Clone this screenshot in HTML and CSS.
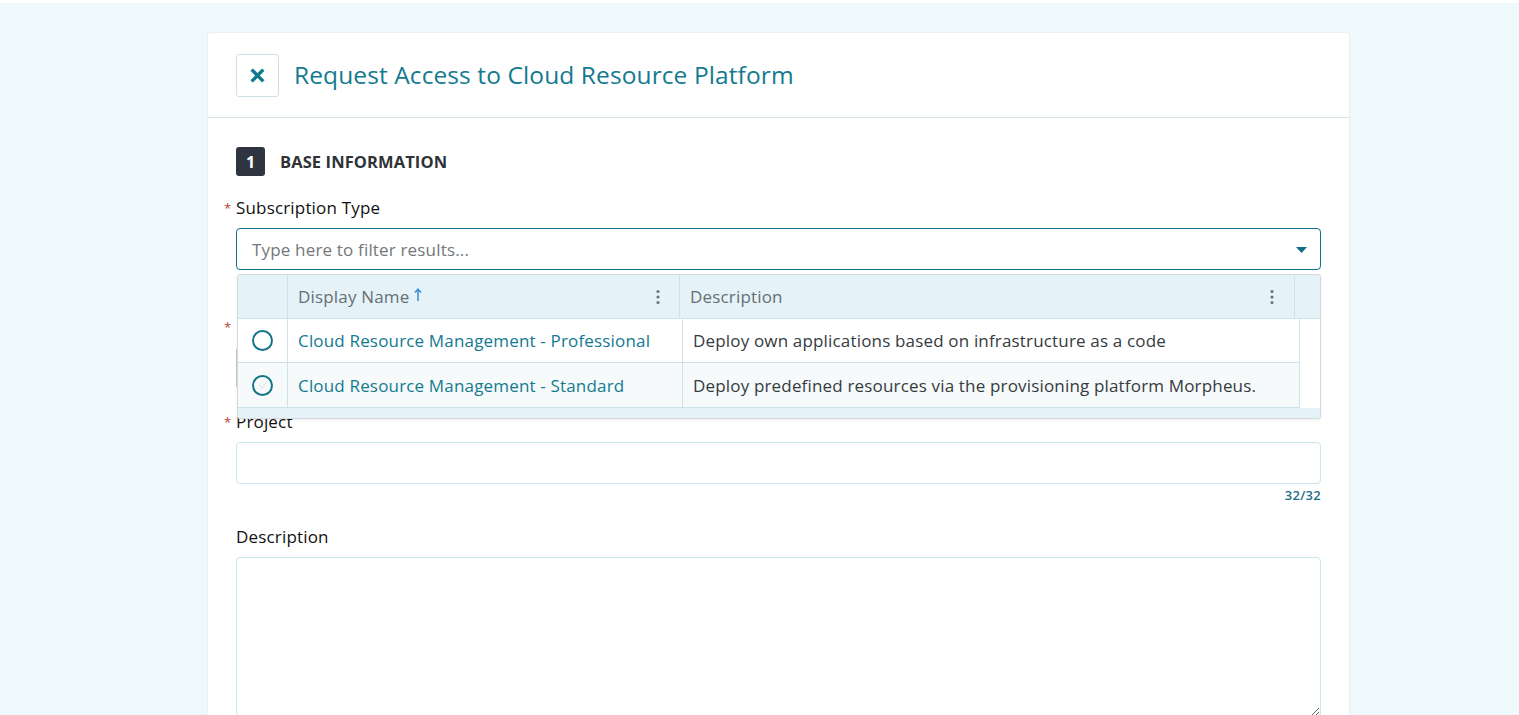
FILE: index.html
```html
<!DOCTYPE html>
<html lang="en">
<head>
<meta charset="utf-8">
<title>Request Access to Cloud Resource Platform</title>
<link rel="stylesheet" href="styles.css">
</head>
<body>
<div class="card">
  <div class="card-header">
    <button class="close-btn" aria-label="Close">
      <svg width="17" height="17" viewBox="0 0 16 16"><path d="M2.5 2.5 L13.5 13.5 M13.5 2.5 L2.5 13.5" stroke="#127a8f" stroke-width="3.2" stroke-linecap="butt" fill="none"/></svg>
    </button>
    <h1 class="title">Request Access to Cloud Resource Platform</h1>
  </div>
  <div class="card-body">
    <div class="section-head">
      <span class="badge">1</span>
      <span class="section-title">BASE INFORMATION</span>
    </div>

    <div class="field field-sub">
      <label class="label"><span class="req">*</span>Subscription Type</label>
      <div class="select">
        <span class="placeholder">Type here to filter results...</span>
        <svg class="caret" width="11" height="6" viewBox="0 0 11 6"><path d="M0 0 H11 L5.5 6 Z" fill="#0f6f86"/></svg>
      </div>
      <div class="dropdown">
        <div class="grid-head">
          <div class="hc hc-check"></div>
          <div class="hc hc-name"><span>Display Name</span>
            <svg class="sort" width="8" height="14" viewBox="0 0 8 14"><path d="M4 13 V1.5 M1 4.5 L4 1.2 L7 4.5" stroke="#3b8fd4" stroke-width="1.5" fill="none"/></svg>
            <svg class="kebab" width="4" height="16" viewBox="0 0 4 16"><circle cx="2" cy="2.5" r="1.6" fill="#6c757a"/><circle cx="2" cy="8" r="1.6" fill="#6c757a"/><circle cx="2" cy="13.5" r="1.6" fill="#6c757a"/></svg>
          </div>
          <div class="hc hc-desc"><span>Description</span>
            <svg class="kebab" width="4" height="16" viewBox="0 0 4 16"><circle cx="2" cy="2.5" r="1.6" fill="#6c757a"/><circle cx="2" cy="8" r="1.6" fill="#6c757a"/><circle cx="2" cy="13.5" r="1.6" fill="#6c757a"/></svg>
          </div>
          <div class="hc hc-fill"></div>
        </div>
        <div class="grid-body">
          <div class="rows">
            <div class="row">
              <div class="c c-check"><span class="radio"></span></div>
              <div class="c c-name">Cloud Resource Management - Professional</div>
              <div class="c c-desc">Deploy own applications based on infrastructure as a code</div>
            </div>
            <div class="row row-alt">
              <div class="c c-check"><span class="radio">
                <svg width="10" height="8" viewBox="0 0 10 8"><path d="M1 4 L4 7 L9 1" stroke="#e4ecee" stroke-width="1.5" fill="none"/></svg>
              </span></div>
              <div class="c c-name">Cloud Resource Management - Standard</div>
              <div class="c c-desc">Deploy predefined resources via the provisioning platform Morpheus.</div>
            </div>
          </div>
          <div class="gutter"></div>
        </div>
        <div class="hscroll"></div>
      </div>
    </div>

    <div class="field field-hidden">
      <div class="label label-empty"><span class="req">*</span></div>
      <div class="input input-disabled"></div>
    </div>

    <div class="field field-project">
      <label class="label"><span class="req">*</span>Project</label>
      <div class="input"></div>
      <div class="counter">32/32</div>
    </div>

    <div class="field field-desc">
      <label class="label">Description</label>
      <textarea class="textarea"></textarea>
    </div>
  </div>
</div>
</body>
</html>
```
FILE: styles.css
```css
* { box-sizing: border-box; }

html, body { margin: 0; padding: 0; }

body {
  background: #eff8fa;
  border-top: 3px solid #ffffff;
  font-family: "Open Sans", "Noto Sans", sans-serif;
  color: #1b1b1b;
  height: 715px;
  overflow: hidden;
}

.card {
  margin: 29px 0 0 207px;
  width: 1143px;
  background: #ffffff;
  border-radius: 4px;
  border: 1px solid #e8f0f2;
}

.card-header {
  height: 85px;
  display: flex;
  align-items: center;
  gap: 15px;
  padding: 0 28px;
  border-bottom: 1px solid #d3e3e8;
}

.close-btn {
  width: 43px;
  height: 43px;
  border: 1px solid #cfe1e7;
  border-radius: 3px;
  background: #ffffff;
  display: flex;
  align-items: center;
  justify-content: center;
  padding: 0;
  margin: 0;
}

.title {
  margin: 0;
  font-size: 24.5px;
  font-weight: 400;
  color: #137a8f;
  letter-spacing: 0.1px;
  line-height: 32px;
}

.card-body {
  padding: 29px 28px 60px 28px;
}

.section-head {
  display: flex;
  align-items: center;
  gap: 15px;
  height: 29px;
}

.badge {
  width: 29px;
  height: 29px;
  border-radius: 3px;
  background: #2e3440;
  color: #ffffff;
  font-weight: 700;
  font-size: 16px;
  display: flex;
  align-items: center;
  justify-content: center;
}

.section-title {
  font-weight: 700;
  font-size: 16.5px;
  color: #2f3336;
  letter-spacing: 0.1px;
}

.field { position: relative; }

.label {
  display: block;
  font-size: 17px;
  letter-spacing: 0.17px;
  line-height: 20px;
  font-weight: 500;
  color: #111111;
  margin-bottom: 10px;
}

.label-empty { height: 20px; }

.req {
  display: inline-block;
  width: 12px;
  margin-left: -12px;
  color: #b5443c;
  font-size: 13px;
  vertical-align: 1px;
}

.field-sub { margin-top: 22px; }

.select {
  height: 42px;
  border: 1px solid #11718a;
  border-radius: 4px;
  display: flex;
  align-items: center;
  justify-content: space-between;
  padding: 0 13px 0 15px;
}

.placeholder {
  font-size: 17px;
  letter-spacing: 0.17px;
  font-weight: 500;
  color: #737779;
}

.caret { margin-top: 2px; }

.field-hidden { margin-top: 47px; }

.input {
  height: 42px;
  border: 1px solid #cbe5ec;
  border-radius: 4px;
  background: #ffffff;
}

.input-disabled {
  border-color: #c3cdd1;
  border-width: 1px 1px 1px 2px;
  background: #f7f9fa;
}

.field-project { margin-top: 23px; }

.counter {
  text-align: right;
  font-size: 13px;
  letter-spacing: 0.3px;
  line-height: 16px;
  margin-top: 3px;
  color: #1d6f86;
  font-weight: 600;
}

.field-desc { margin-top: 24px; }

.textarea {
  display: block;
  width: 100%;
  height: 160px;
  border: 1px solid #cbe5ec;
  border-radius: 4px;
  resize: vertical;
  font-family: inherit;
}

/* Dropdown grid */
.dropdown {
  position: absolute;
  left: 1px;
  top: 76px;
  width: 1084px;
  height: 145px;
  background: #ffffff;
  border: 1px solid #d4dadd;
  border-radius: 3px;
  box-shadow: 0 1px 3px rgba(0, 0, 0, 0.08);
  overflow: hidden;
  z-index: 5;
  display: flex;
  flex-direction: column;
}

.grid-head {
  display: flex;
  height: 44px;
  background: #e5f2f8;
  border-bottom: 1px solid #cde3ea;
  flex: none;
}

.hc {
  height: 100%;
  border-right: 1px solid #cde3ea;
  display: flex;
  align-items: center;
  font-size: 17px;
  letter-spacing: 0.17px;
  font-weight: 500;
  color: #676f74;
}

.hc-check { width: 50px; }
.hc-name { width: 392px; padding: 0 19px 0 10px; }
.hc-desc { width: 615px; padding: 0 20px 0 10px; }
.hc-fill { flex: 1; border-right: none; }

.hc-name span, .hc-desc span { flex: none; }
.sort { margin-left: 5px; margin-top: -3px; }
.kebab { margin-left: auto; }

.grid-body {
  display: flex;
  flex: none;
}

.rows { width: 1062px; border-right: 1px solid #cde3ea; }
.gutter { flex: 1; background: #ffffff; }

.row {
  display: flex;
  height: 44px;
  border-bottom: 1px solid #cde3ea;
  background: #ffffff;
}

.row-alt { background: #f6fafa; height: 45px; }

.c {
  display: flex;
  align-items: center;
  height: 100%;
  font-size: 17px;
  letter-spacing: 0.17px;
}

.c-check {
  width: 50px;
  border-right: 1px solid #cde3ea;
  justify-content: center;
}

.c-name {
  width: 395px;
  border-right: 1px solid #cde3ea;
  padding-left: 10px;
  color: #137a8f;
  font-weight: 500;
}

.c-desc {
  flex: 1;
  padding-left: 10px;
  color: #353b40;
  font-weight: 500;
}

.radio {
  width: 21px;
  height: 21px;
  border: 2px solid #137489;
  border-radius: 50%;
  display: flex;
  align-items: center;
  justify-content: center;
}

.hscroll {
  flex: 1;
  background: #e5f2f8;
}
```
